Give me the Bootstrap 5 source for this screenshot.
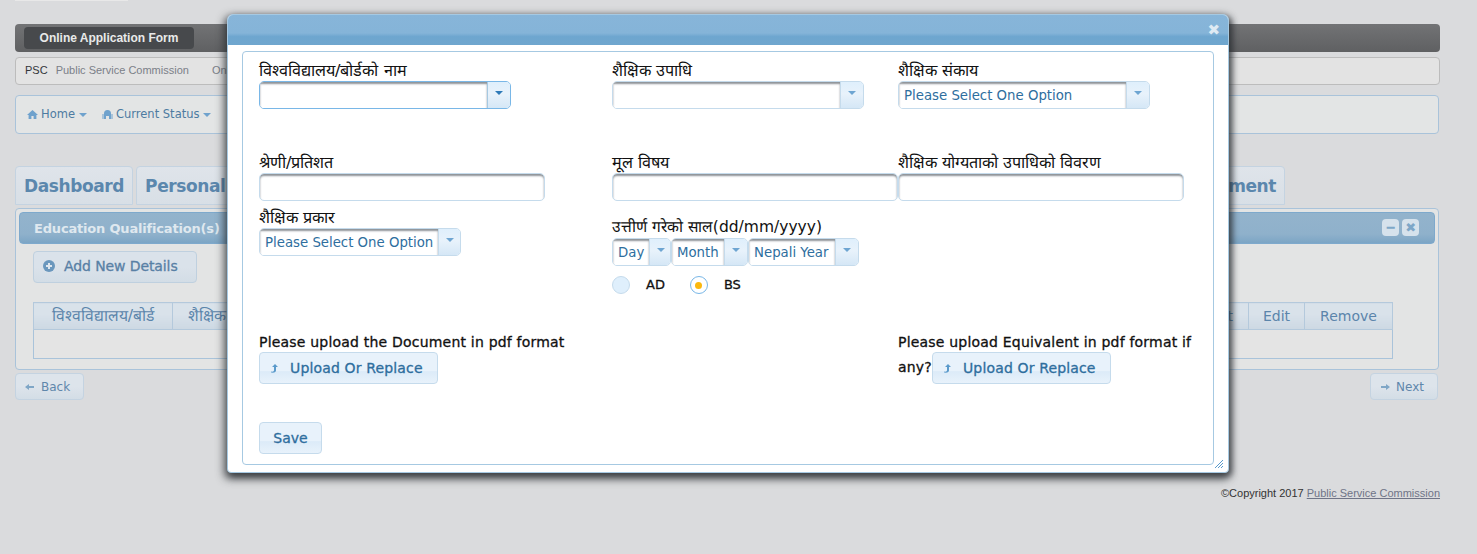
<!DOCTYPE html>
<html lang="ne">
<head>
<meta charset="utf-8">
<title>Online Application Form</title>
<link href="https://cdn.jsdelivr.net/npm/bootstrap@5.3.0/dist/css/bootstrap.min.css" rel="stylesheet">
<style>
html,body{height:100%}
body{background:#dadbdd;font-family:"DejaVu Sans",sans-serif;color:#111;overflow:hidden;position:relative;padding:24px 37px 0 15px;font-size:13px}
.top-strip{position:absolute;left:15px;top:0;width:113px;height:1px;background:#e8e8e8}
.head-bar{height:28px;background:linear-gradient(#727375,#5f6062);border-radius:4px;padding:3px 9px}
.head-title{display:block;width:170px;height:22px;background:#47494c;border-radius:4px;color:#e9e9e9;font:bold 12px/22px "Liberation Sans",sans-serif;text-align:center}
.crumb-bar{height:28px;margin-top:5px;background:#e3e3e3;border:1px solid #bcbcbc;border-radius:4px;font:11px/25px "Liberation Sans",sans-serif;padding-left:9px;gap:8px;color:#7b8088}
.crumb-bar b{font-weight:400;color:#33363a;font-size:11px}
.crumb-bar .crumb-on{margin-left:15px}
.menu-bar{height:39px;margin-top:10px;margin-right:1px;background:#e3e5e5;border:1px solid #a9c3da;border-radius:4px;padding:0 11px;gap:15px;color:#4d7ba1;font-size:11.5px}
.menu-item{display:flex;align-items:center;gap:3px}
.caret-mini{width:0;height:0;border:4px solid transparent;border-top-color:#6fa2cd;border-bottom:0;margin-left:1px}
.tab-row{margin-top:32px;gap:3px;height:39px}
.tab-pill{height:39px;border:1px solid #c4d3e1;border-radius:4px 4px 0 0;background:linear-gradient(#dfe4ea,#d8dfe6);color:#5b87ad;font-weight:700;font-size:17px;letter-spacing:-.4px;line-height:38px;padding:0 8px;white-space:nowrap}
.tab-spacer{flex:1}
.tab-end{width:85px;margin-right:155px;text-align:right}
.panel-box{height:162px;margin-top:3px;margin-right:1px;background:#e3e4e4;border:1px solid #a9c3da;border-radius:4px;padding:3px}
.panel-head{height:32px;background:linear-gradient(#93b3cc 0,#8fb1cb 70%,#7ca5c5 100%);border:1px solid #7ea9cc;border-radius:4px;color:#dfe8ef;font-weight:700;font-size:13px;letter-spacing:-.18px;line-height:32px;padding:0 14px;white-space:nowrap}
.ctl-btn{width:17px;height:17px;background:#d6e2ec;border-radius:4px;color:#7ea7c8;font:bold 13px/17px "DejaVu Sans",sans-serif;text-align:center;margin-left:3px}
.panel-ctl{margin-right:1px;margin-top:6px}
.add-btn{height:32px;width:164px;margin:7px 0 0 14px;background:linear-gradient(#dae2ea 50%,#d3dde6);border:1px solid #bfd0df;border-radius:4px;color:#5880a5;font-size:14px;letter-spacing:-.1px;-webkit-text-stroke:.3px #5880a5;gap:9px;padding:0 9px 2px;white-space:nowrap}
.info-grid{margin:19px 42px 0 14px;width:1360px;border:1px solid #a9c3da;height:57px;font-size:14px;color:#5b85ab}
.info-grid thead th{height:27px;background:linear-gradient(#d9e2ea 40%,#ccd8e3);border:1px solid #b4c9dc;font-weight:400;text-align:center;padding:0;vertical-align:middle;color:#5b85ab}
.info-grid thead .dev-th{font-size:15.7px}
.info-grid thead .dev-left{text-align:left;padding-left:15px;width:1006px}
.info-grid thead .cut-right{text-align:right;padding-right:15px;width:71px}
.info-grid tbody td{height:29px;background:#e4e4e4;padding:0;border:0}
.nav-foot{margin-top:3px;margin-right:2px}
.step-btn{height:27px;background:linear-gradient(#dde4eb 50%,#d3dde6);border:1px solid #c4d3e1;border-radius:4px;color:#5f87ab;font-size:12px;gap:6px;padding:0 13px 0 9px}
.copy-line{margin-top:87px;text-align:right;font:11px "Liberation Sans",sans-serif;color:#333}
.copy-line a{color:#6f7487}
.dlg-box{position:absolute;left:227px;top:14px;width:1002px;height:459px;background:#fff;border:1px solid #a6c9e2;border-radius:6px 6px 4px 4px;box-shadow:-1px 4px 8px 2px rgba(40,44,48,.75),3px 3px 6px rgba(40,44,48,.6)}
.dlg-title{height:30px;background:linear-gradient(#87b5d9 0,#85b4d8 60%,#6ea6cf 72%,#6fa6ce 100%);border-radius:5px 5px 0 0;position:relative}
.dlg-x{position:absolute;right:8px;top:6px;color:#dfeaf3;font:bold 15px/18px "DejaVu Sans",sans-serif}
.dlg-frame{position:absolute;left:14px;top:36px;width:972px;height:414px;border:1px solid #a6c9e2;border-radius:4px;padding:8px 16px 0}
.dlg-grid{display:grid;grid-template-columns:353px 286px 1fr;grid-template-rows:92px 55px 125px 53px}
.fld-label{display:block;font-size:16.2px;line-height:21px;color:#111;white-space:nowrap;margin:0}
.fld-date{font-size:15.5px}
.txt-field{display:block;height:28px;width:286px;border:1px solid #c5dbec;border-radius:5px;background:#fff;box-shadow:inset 0 2px 2px #8d9297;padding:0}
.combo-wrap{display:inline-flex;height:28px;border:1px solid #c5dbec;border-radius:5px;overflow:hidden;vertical-align:top;color:#2e6e9e}
.combo-text{display:block;flex:1;background:#fff;box-shadow:inset 0 2px 2px #8d9297;padding:0 5px;font-size:13.3px;line-height:27px;white-space:nowrap;height:100%;border:0;color:#2e6e9e}
.combo-drop{width:23px;flex:none;background:linear-gradient(#dfeffc,#e8f2fb 45%,#d5e7f6);border-left:1px solid #c5dbec;display:flex;justify-content:center;padding-top:9px}
.combo-drop i{display:block;width:0;height:0;border:4px solid transparent;border-top-color:#6ea5d2;border-bottom:0}
.combo-hot{border-color:#79b7e7}
.combo-hot .combo-drop{border-left-color:#a6c9e2}
.combo-hot .combo-drop i{border-top-color:#2e7ab8}
.w-full{width:252px}
.w-type{width:202px}
.w-day{width:59px}
.w-month{width:77px}
.w-year{width:111px}
.date-slot{padding-top:10px}
.radio-row{margin-top:9px;font-size:13px;-webkit-text-stroke:.3px #111;height:20px}
.radio-dot{width:18px;height:18px;border:1px solid #c5dbec;border-radius:50%;background:#dfeffc}
.radio-on{background:#fff;border-color:#79b7e7;display:flex;align-items:center;justify-content:center;margin-left:25px}
.radio-on::after{content:"";width:7px;height:7px;border-radius:50%;background:#fbb80f}
.up-label{font-size:14px;-webkit-text-stroke:.3px #111;letter-spacing:.2px;line-height:20px;white-space:nowrap}
.up-btn{height:32px;background:linear-gradient(#e8f2fb 60%,#dcebf8 62%,#e8f2fb);border:1px solid #c5dbec;border-radius:4px;color:#2e6e9e;-webkit-text-stroke:.3px #2e6e9e;letter-spacing:.15px;font-size:14px;padding:0 14px 0 10px;gap:11px;vertical-align:middle}
.dlg-save{height:32px;width:63px;margin-top:37px;background:linear-gradient(#e8f2fb 60%,#dcebf8 62%,#e8f2fb);border:1px solid #c5dbec;border-radius:4px;color:#2e6e9e;-webkit-text-stroke:.3px #2e6e9e;font-size:14px;padding:0}
.grip{position:absolute;right:5px;bottom:4px}
</style>
</head>
<body>
<div class="top-strip"></div>
<div class="head-bar"><span class="head-title">Online Application Form</span></div>
<div class="crumb-bar d-flex"><b>PSC</b><span>Public Service Commission</span><span class="crumb-on">Online</span></div>
<div class="menu-bar d-flex align-items-center">
  <span class="menu-item"><svg width="11" height="11" viewBox="0 0 11 11"><path fill="#6fa2cd" d="M5.5 1 0 6h1.6v4h2.8V7h2.2v3h2.8V6H11z"/></svg>Home<i class="caret-mini"></i></span>
  <span class="menu-item"><svg width="11" height="11" viewBox="0 0 11 11"><path fill="#6fa2cd" d="M2 4.5a3.5 3.5 0 0 1 7 0V10H7V7H4v3H2z"/><rect x="0.5" y="5" width="1" height="5" fill="#6fa2cd"/><rect x="9.5" y="5" width="1" height="5" fill="#6fa2cd"/></svg>Current Status<i class="caret-mini"></i></span>
</div>
<div class="tab-row d-flex">
  <div class="tab-pill">Dashboard</div>
  <div class="tab-pill">Personal</div>
  <div class="tab-spacer"></div>
  <div class="tab-pill tab-end">ment</div>
</div>
<div class="panel-box">
  <div class="panel-head d-flex justify-content-between">
    <span>Education Qualification(s)</span>
    <span class="panel-ctl d-flex"><span class="ctl-btn">━</span><span class="ctl-btn">✖</span></span>
  </div>
  <div class="add-btn d-flex align-items-center"><svg width="12" height="12" viewBox="0 0 12 12"><circle cx="6" cy="6" r="6" fill="#6a97bd"/><path fill="#dfe7ee" d="M5 3h2v2h2v2H7v2H5V7H3V5h2z"/></svg>Add New Details</div>
  <table class="info-grid">
    <thead><tr>
      <th class="dev-th" style="width:139px">विश्वविद्यालय/बोर्ड</th>
      <th class="dev-th dev-left">शैक्षिक</th>
      <th class="cut-right">t</th>
      <th style="width:56px">Edit</th>
      <th style="width:88px">Remove</th>
    </tr></thead>
    <tbody><tr><td colspan="5"></td></tr></tbody>
  </table>
</div>
<div class="nav-foot d-flex justify-content-between">
  <div class="step-btn d-flex align-items-center"><svg width="10" height="8" viewBox="0 0 10 8"><path fill="#7fa6c6" d="M0 4 4 1v2h5v2H4v2z"/></svg>Back</div>
  <div class="step-btn d-flex align-items-center"><svg width="10" height="8" viewBox="0 0 10 8"><path fill="#7fa6c6" d="M10 4 6 1v2H1v2h5v2z"/></svg>Next</div>
</div>
<div class="copy-line">©Copyright 2017 <a href="#">Public Service Commission</a></div>

<div class="dlg-box">
  <div class="dlg-title"><span class="dlg-x">✖</span></div>
  <div class="dlg-frame">
    <div class="dlg-grid">
      <div>
        <label class="fld-label">विश्वविद्यालय/बोर्डको नाम</label>
        <div class="combo-wrap combo-hot w-full"><span class="combo-text"></span><span class="combo-drop"><i></i></span></div>
      </div>
      <div>
        <label class="fld-label">शैक्षिक उपाधि</label>
        <div class="combo-wrap w-full"><span class="combo-text"></span><span class="combo-drop"><i></i></span></div>
      </div>
      <div>
        <label class="fld-label">शैक्षिक संकाय</label>
        <div class="combo-wrap w-full"><span class="combo-text">Please Select One Option</span><span class="combo-drop"><i></i></span></div>
      </div>
      <div>
        <label class="fld-label">श्रेणी/प्रतिशत</label>
        <input class="txt-field" type="text">
      </div>
      <div>
        <label class="fld-label">मूल विषय</label>
        <input class="txt-field" type="text">
      </div>
      <div>
        <label class="fld-label">शैक्षिक योग्यताको उपाधिको विवरण</label>
        <input class="txt-field" type="text">
      </div>
      <div>
        <label class="fld-label">शैक्षिक प्रकार</label>
        <div class="combo-wrap w-type"><span class="combo-text">Please Select One Option</span><span class="combo-drop"><i></i></span></div>
      </div>
      <div class="date-slot">
        <label class="fld-label fld-date">उत्तीर्ण गरेको साल(dd/mm/yyyy)</label>
        <div class="d-flex">
          <div class="combo-wrap w-day"><span class="combo-text">Day</span><span class="combo-drop"><i></i></span></div>
          <div class="combo-wrap w-month"><span class="combo-text">Month</span><span class="combo-drop"><i></i></span></div>
          <div class="combo-wrap w-year"><span class="combo-text">Nepali Year</span><span class="combo-drop"><i></i></span></div>
        </div>
        <div class="radio-row d-flex align-items-center">
          <span class="radio-dot"></span><span class="ms-3">AD</span>
          <span class="radio-dot radio-on"></span><span class="ms-3">BS</span>
        </div>
      </div>
      <div></div>
      <div>
        <div class="up-label">Please upload the Document in pdf format</div>
        <div class="btn up-btn d-inline-flex align-items-center"><svg width="9" height="9" viewBox="0 0 9 9"><path fill="#5a9acb" d="M5 0 8 3H6v3.5C6 8 4.5 9 1 8.5V7.5C3 8 4 7.5 4 6V3H2z"/></svg>Upload Or Replace</div>
      </div>
      <div></div>
      <div class="up-label">
        <div>Please upload Equivalent in pdf format if</div>any?<div class="btn up-btn d-inline-flex align-items-center"><svg width="9" height="9" viewBox="0 0 9 9"><path fill="#5a9acb" d="M5 0 8 3H6v3.5C6 8 4.5 9 1 8.5V7.5C3 8 4 7.5 4 6V3H2z"/></svg>Upload Or Replace</div>
      </div>
    </div>
    <button class="btn dlg-save" type="button">Save</button>
  </div>
  <svg class="grip" width="8" height="8" viewBox="0 0 8 8"><path stroke="#5a9acb" stroke-width="1" d="M8 0 0 8M8 3 3 8M8 6 6 8"/></svg>
</div>
<script src="https://cdn.jsdelivr.net/npm/bootstrap@5.3.0/dist/js/bootstrap.bundle.min.js"></script>
</body>
</html>
